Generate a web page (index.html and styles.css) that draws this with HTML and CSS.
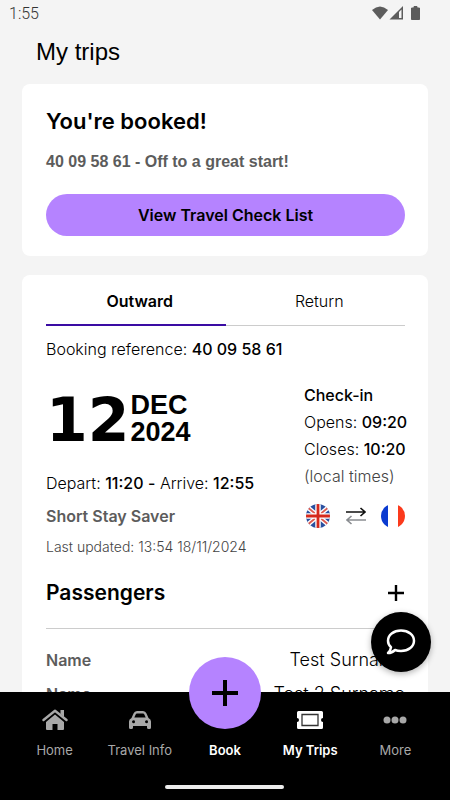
FILE: index.html
```html
<!DOCTYPE html>
<html lang="en">
<head>
<meta charset="utf-8">
<meta name="viewport" content="width=device-width, initial-scale=1">
<title>My trips</title>
<link rel="stylesheet" href="styles.css">
</head>
<body>
<div class="status">
  <span>1:55</span>
  <svg class="status-icons" width="50" height="16" viewBox="0 0 50 16" aria-hidden="true">
    <path d="M0 4Q8-3 16 4L8 13.500Z" fill="#5c5c5c"/>
    <path d="M31 0V13.500H17.500Z" fill="#5c5c5c"/>
    <path d="M27 6L29.500 3.500V12H27Z" fill="#f4f4f4"/>
    <path d="M39.500 2H42V0.500H45V2H47.500V13.500H39.500Z" fill="#5c5c5c" stroke="#5c5c5c" stroke-linejoin="round"/>
  </svg>
</div>
<header class="title"><h1>My trips</h1></header>
<main class="content">
  <section class="card booked">
    <h2>You're booked!</h2>
    <p class="lead">40 09 58 61 - Off to a great start!</p>
    <button class="cta" type="button">View Travel Check List</button>
  </section>
  <section class="card trip">
    <div class="tabs" role="tablist">
      <button class="tab active" type="button" role="tab" aria-selected="true">Outward</button>
      <button class="tab" type="button" role="tab" aria-selected="false">Return</button>
    </div>
    <p class="reference">Booking reference: <b>40 09 58 61</b></p>
    <div class="details">
      <div class="journey">
        <div class="date">
          <span class="day">12</span>
          <span class="month">DEC<br>2024</span>
        </div>
        <p class="times">Depart: <b>11:20</b> <b>-</b> Arrive: <b>12:55</b></p>
        <p class="fare">Short Stay Saver</p>
        <p class="updated">Last updated: 13:54 18/11/2024</p>
      </div>
      <div class="checkin">
        <p><b>Check-in</b></p>
        <p>Opens: <b>09:20</b></p>
        <p>Closes: <b>10:20</b></p>
        <p class="local">(local times)</p>
        <div class="route">
          <svg width="24" height="24" viewBox="0 0 24 24" role="img" aria-label="United Kingdom">
            <clipPath id="round"><circle cx="12" cy="12" r="12"/></clipPath>
            <g clip-path="url(#round)">
              <path d="M0 0H24V24H0Z" fill="#2a50a0"/>
              <path d="M0 2L24 22M24 2L0 22" stroke="#fff" stroke-width="4.500"/>
              <path d="M0 2L24 22M24 2L0 22" stroke="#dd5a50" stroke-width="1.800"/>
              <path d="M12 0V24M0 12H24" stroke="#fff" stroke-width="5.500"/>
              <path d="M12 0V24M0 12H24" stroke="#d5291c" stroke-width="2.800"/>
            </g>
          </svg>
          <svg width="20" height="18" viewBox="0 0 20 18" fill="none" stroke-width="1.600" aria-hidden="true">
            <path d="M0 5H19M14.500 1L19 5L14.500 9" stroke="#111"/>
            <path d="M20 13H1M5.500 9L1 13L5.500 17" stroke="#8a8d91"/>
          </svg>
          <svg width="24" height="24" viewBox="0 0 24 24" role="img" aria-label="France">
            <g clip-path="url(#round)">
              <path d="M0 0H24V24H0Z" fill="#fff"/>
              <path d="M0 0H7V24H0Z" fill="#0b3bd0"/>
              <path d="M17 0H24V24H17Z" fill="#fb3a1c"/>
            </g>
          </svg>
        </div>
      </div>
    </div>
    <div class="passengers">
      <h2>Passengers</h2>
      <button class="expand" type="button" aria-label="Show passengers">
        <svg width="16" height="16" viewBox="0 0 16 16" aria-hidden="true"><path d="M8 0V16M0 8H16" stroke="#000" stroke-width="2.400"/></svg>
      </button>
    </div>
    <dl class="names">
      <div><dt>Name</dt><dd>Test Surname</dd></div>
      <div><dt>Name</dt><dd>Test 2 Surname</dd></div>
    </dl>
  </section>
</main>
<nav class="nav" aria-label="Main">
  <button class="chat" type="button" aria-label="Chat">
    <svg width="30" height="26" viewBox="0 0 30 26" fill="none" stroke="#fff" stroke-width="2.500" stroke-linejoin="round" aria-hidden="true">
      <path d="M15 1.500C22.500 1.500 28 6 28 11.800S22.500 22 15 22Q11.500 22 9 21Q6 24 2 24Q4.800 21.500 5 18.200Q2 15.500 2 11.800C2 6 7.500 1.500 15 1.500Z"/>
    </svg>
  </button>
  <a class="item" href="#home">
    <svg width="26" height="22" viewBox="0 0 26 22" aria-hidden="true">
      <path d="M13 5.500L22 13V20Q22 21 21 21H15.500V15H10.500V21H5Q4 21 4 20V13Z" fill="#a8a8a8"/>
      <path d="M1.500 11L13 1.800L24.500 11" fill="none" stroke="#000" stroke-width="4.500"/>
      <path d="M18.500 1H22V8L18.500 5Z" fill="#a8a8a8"/>
      <path d="M1.500 11L13 1.800L24.500 11" fill="none" stroke="#a8a8a8" stroke-width="2.400" stroke-linecap="round" stroke-linejoin="round"/>
    </svg>
    <span>Home</span>
  </a>
  <a class="item" href="#info">
    <svg width="22" height="22" viewBox="0 0 22 22" aria-hidden="true">
      <path fill="#a8a8a8" fill-rule="evenodd" d="M2.500 9L4.500 4.500Q5.500 2 8 2H14Q16.500 2 17.500 4.500L19.500 9Q22 10 22 12.500V18.500Q22 20 20.500 20H19.500Q18 20 18 18.500V17H4V18.500Q4 20 2.500 20H1.500Q0 20 0 18.500V12.500Q0 10 2.500 9ZM5.300 8.500H16.700L15.200 5.200Q15 4.500 14 4.500H8Q7 4.500 6.800 5.200ZM4.500 11.300A1.500 1.500 0 1 0 4.510 14.300A1.500 1.500 0 1 0 4.500 11.300ZM17.500 11.300A1.500 1.500 0 1 0 17.510 14.300A1.500 1.500 0 1 0 17.500 11.300Z"/>
    </svg>
    <span>Travel Info</span>
  </a>
  <a class="item book" href="#book">
    <span class="plus">
      <svg width="26" height="26" viewBox="0 0 26 26" aria-hidden="true"><path d="M13 0V26M0 13H26" stroke="#000" stroke-width="4"/></svg>
    </span>
    <span>Book</span>
  </a>
  <a class="item current" href="#trips" aria-current="page">
    <svg width="26" height="22" viewBox="0 0 26 22" aria-hidden="true">
      <path fill="#fff" d="M1.500 2H24.500Q26 2 26 3.500V9A2 2 0 0 0 26 13V18.500Q26 20 24.500 20H1.500Q0 20 0 18.500V13A2 2 0 0 0 0 9V3.500Q0 2 1.500 2Z"/>
      <path d="M5 5.500H21V16.500H5Z" fill="none" stroke="#333" stroke-width="1.300"/>
    </svg>
    <span>My Trips</span>
  </a>
  <a class="item" href="#more">
    <svg width="24" height="22" viewBox="0 0 24 22" fill="#a8a8a8" aria-hidden="true"><circle cx="4" cy="11" r="3.500"/><circle cx="12" cy="11" r="3.500"/><circle cx="20" cy="11" r="3.500"/></svg>
    <span>More</span>
  </a>
  <div class="handle"></div>
</nav>
</body>
</html>
```
FILE: styles.css
```css
* { box-sizing: border-box; }
body {
  margin: 0;
  height: 100vh;
  display: flex;
  flex-direction: column;
  background: #f4f4f4;
  color: #000;
  font: 300 16px/24px Inter, sans-serif;
}
h1, h2, p, dl, dd { margin: 0; }
b { font-weight: 500; }
button { border: 0; padding: 0; background: none; font: inherit; color: inherit; cursor: pointer; }
.status {
  display: flex;
  justify-content: space-between;
  align-items: center;
  height: 28px;
  padding: 0 28px 0 9px;
  color: #333;
  font: 300 16px/24px Roboto, sans-serif;
}
.title { height: 56px; padding: 8px 36px; }
h1 { font: 400 24px/32px "Liberation Sans", sans-serif; }
.content {
  flex: 1;
  min-height: 0;
  overflow: hidden;
  padding: 0 22px;
}
.card { background: #fff; border-radius: 8px; padding: 0 23px 0 24px; }
.booked { padding-top: 23px; padding-bottom: 20px; margin-bottom: 19px; }
h2 { font: 600 22px/28px Inter, sans-serif; }
.lead { margin: 15px 0 20px; color: #5c5c5c; font: 700 16px/24px "Liberation Sans", sans-serif; }
.cta {
  display: block;
  width: 100%;
  height: 42px;
  border-radius: 21px;
  background: #b583ff;
  font: 600 16px/24px Inter, sans-serif;
}
.tabs { display: flex; }
.tab { flex: 1; height: 51px; padding: 2px 0 0 8px; border-bottom: 1px solid #ccc; }
.active { border-bottom: 2px solid #3a0ca3; font-weight: 600; }
.reference { padding: 11px 0 21px; }
.details { display: flex; justify-content: space-between; }
.checkin { width: 101px; white-space: nowrap; }
.checkin p { line-height: 27px; }
.local { color: #444; }
.route { display: flex; justify-content: space-between; align-items: center; padding: 14px 0 0 2px; }
.date { display: flex; align-items: last baseline; gap: 1px; height: 70px; padding-bottom: 5px; }
.day { font: 700 60px/54px "DejaVu Sans", sans-serif; }
.month { font: 700 27px/27px "Liberation Sans", sans-serif; }
.times { margin: 19px 0 9px; }
.fare { color: #5c5c5c; font-weight: 600; margin-bottom: 7px; }
.updated { color: #444; font-size: 14px; }
.passengers {
  display: flex;
  justify-content: space-between;
  align-items: center;
  height: 70px;
  padding-bottom: 2px;
  border-bottom: 1px solid #ccc;
}
.passengers h2 { font-size: 21px; }
.expand { width: 16px; height: 16px; margin-right: 1px; }
.expand svg { display: block; }
.names { padding-top: 19px; }
.names div { display: flex; justify-content: space-between; margin-bottom: 10px; }
dt { color: #5c5c5c; font-weight: 600; }
dd { font-size: 18px; }
.nav {
  position: relative;
  display: grid;
  grid-template-columns: repeat(5, 1fr);
  grid-template-rows: 93px 6px;
  height: 108px;
  padding: 0 12px;
  background: #000;
}
.item {
  display: flex;
  flex-direction: column;
  align-items: center;
  gap: 9px;
  padding-top: 17px;
  color: #a8a8a8;
  font: 400 13px/20px Inter, sans-serif;
  text-decoration: none;
  white-space: nowrap;
}
.current, .book { color: #fff; font-weight: 600; }
.book { position: relative; padding-top: 48px; }
.plus {
  position: absolute;
  top: -35px;
  left: 50%;
  margin-left: -36px;
  width: 72px;
  height: 72px;
  border-radius: 50%;
  display: grid;
  place-items: center;
  background: #b583ff;
}
.handle { grid-column: 1 / -1; justify-self: center; width: 119px; height: 4px; border-radius: 2px; background: #ededed; }
.chat {
  position: absolute;
  right: 19px;
  bottom: 128px;
  width: 60px;
  height: 60px;
  border-radius: 50%;
  display: grid;
  place-items: center;
  background: #000;
  box-shadow: 0 2px 6px rgba(0, 0, 0, .3);
}
```
